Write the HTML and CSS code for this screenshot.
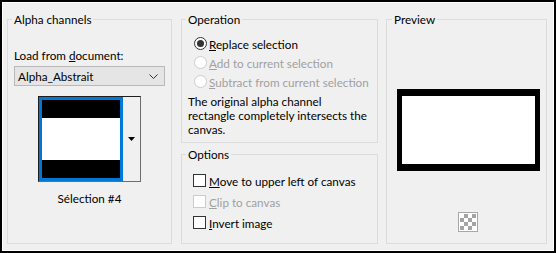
FILE: index.html
```html
<!DOCTYPE html>
<html lang="en">
<head>
    <meta charset="UTF-8">
    <meta name="viewport" content="width=device-width, initial-scale=1.0">
    <title>Load Selection From Alpha Channel</title>
    <link rel="stylesheet" href="styles.css">
</head>
<body>
    <div class="dialog">
        <fieldset class="group alpha">
            <legend>Alpha channels</legend>
            <label class="field-label" for="doc">Load from <u>d</u>ocument:</label>
            <div class="combo" id="doc">
                <span>Alpha_Abstrait</span>
                <svg class="chevron" width="9" height="5" viewBox="0 0 9 5">
                    <path d="M0.5 0.5 L4.5 4.5 L8.5 0.5" fill="none" stroke="#333" stroke-width="1"/>
                </svg>
            </div>
            <div class="thumb">
                <div class="thumb-image">
                    <div class="band dark"></div>
                    <div class="band light"></div>
                    <div class="band dark"></div>
                </div>
                <div class="thumb-arrow">
                    <svg width="7" height="4" viewBox="0 0 7 4">
                        <path d="M0 0 H7 L3.5 4 Z" fill="#000"/>
                    </svg>
                </div>
            </div>
            <div class="caption">Sélection #4</div>
        </fieldset>

        <div class="middle">
            <fieldset class="group operation">
                <legend>Operation</legend>
                <div class="choice">
                    <span class="radio checked"></span>
                    <span><u>R</u>eplace selection</span>
                </div>
                <div class="choice disabled">
                    <span class="radio"></span>
                    <span><u>A</u>dd to current selection</span>
                </div>
                <div class="choice disabled">
                    <span class="radio"></span>
                    <span><u>S</u>ubtract from current selection</span>
                </div>
                <p class="note">The original alpha channel<br>rectangle completely intersects the<br>canvas.</p>
            </fieldset>

            <fieldset class="group options">
                <legend>Options</legend>
                <div class="choice tall">
                    <span class="check"></span>
                    <span><u>M</u>ove to upper left of canvas</span>
                </div>
                <div class="choice tall disabled">
                    <span class="check"></span>
                    <span><u>C</u>lip to canvas</span>
                </div>
                <div class="choice tall">
                    <span class="check"></span>
                    <span><u>I</u>nvert image</span>
                </div>
            </fieldset>
        </div>

        <fieldset class="group preview">
            <legend>Preview</legend>
            <div class="preview-image"></div>
            <div class="checker"><div class="checker-fill"></div></div>
        </fieldset>
    </div>
</body>
</html>
```

FILE: styles.css
```css
body {
    margin: 0;
    font-family: Lato, "Liberation Sans", sans-serif;
    font-size: 11.7px;
    line-height: 16px;
    color: #000;
}

.dialog {
    width: 556px;
    height: 253px;
    box-sizing: border-box;
    border: 2px solid #000;
    box-shadow: inset 0 0 0 1px #fff;
    background-color: #f0f0f0;
    padding: 9px 0 0 5px;
    display: flex;
    align-items: flex-start;
    white-space: nowrap;
}

.group {
    margin: 0;
    padding: 0 6px;
    border: 1px solid #dcdcdc;
    box-sizing: border-box;
    min-inline-size: 0;
}

.group legend {
    margin-left: -2px;
    padding: 0 2px;
    line-height: 16px;
}

/* Alpha channels */
.alpha {
    width: 165px;
    height: 233px;
}

.field-label {
    display: block;
    margin-top: 20px;
}

.combo {
    margin-top: 3px;
    height: 20px;
    box-sizing: border-box;
    border: 1px solid #b9b9b9;
    background-color: #e5e5e5;
    padding: 0 6px 0 3px;
    display: flex;
    align-items: center;
    justify-content: space-between;
}

.thumb {
    margin: 10px 0 0 24px;
    width: 103px;
    height: 86px;
    box-sizing: border-box;
    border: 1px solid #6d6d6d;
    border-left-color: #1e1e1e;
    border-top-color: #1e1e1e;
    display: flex;
}

.thumb-image {
    width: 84px;
    height: 84px;
    box-sizing: border-box;
    border: 3px solid #0078d7;
    display: flex;
    flex-direction: column;
}

.band.dark {
    height: 18px;
    background-color: #000;
}

.band.light {
    height: 42px;
    background-color: #fff;
}

.thumb-arrow {
    flex: 1;
    display: flex;
    align-items: center;
    justify-content: center;
}

.caption {
    margin-top: 8px;
    text-align: center;
}

/* Operation / Options */
.middle {
    margin-left: 9px;
    display: flex;
    flex-direction: column;
}

.operation {
    width: 197px;
    height: 132px;
}

.options {
    width: 197px;
    height: 98px;
    margin-top: 3px;
}

.choice {
    height: 19px;
    display: flex;
    align-items: center;
    gap: 2px;
}

.operation .choice:first-of-type {
    margin-top: 7px;
}

.choice.tall {
    height: 21px;
    gap: 3px;
}

.options .choice:first-of-type {
    margin-top: 8px;
}

.choice.disabled {
    color: #a0a0a0;
}

.radio {
    width: 13px;
    height: 13px;
    box-sizing: border-box;
    margin-left: 6px;
    border: 1px solid #333;
    border-radius: 50%;
    background-color: #fff;
    display: flex;
    align-items: center;
    justify-content: center;
}

.radio.checked::after {
    content: "";
    width: 7px;
    height: 7px;
    border-radius: 50%;
    background-color: #333;
}

.disabled .radio,
.disabled .check {
    border-color: #cccccc;
}

.check {
    width: 13px;
    height: 13px;
    box-sizing: border-box;
    margin-left: 5px;
    border: 1px solid #333;
    background-color: #fff;
}

.note {
    margin: 3px 0 0;
    line-height: 14px;
}

/* Preview */
.preview {
    margin-left: 8px;
    width: 161px;
    height: 233px;
    padding: 0 7px;
}

.preview-image {
    margin: 62px 0 0 3px;
    width: 143px;
    height: 82px;
    box-sizing: border-box;
    border: 7px solid #000;
    border-left-width: 5px;
    border-right-width: 5px;
    background-color: #fff;
}

.checker {
    margin: 41px 0 0 64px;
    width: 20px;
    height: 20px;
    box-sizing: border-box;
    border: 1px solid #a8a8a8;
    padding: 1px;
    background-color: #fff;
}

.checker-fill {
    width: 16px;
    height: 16px;
    background: repeating-conic-gradient(#a4a4a4 0 25%, #fff 0 50%) 0 0 / 8px 8px;
}
```
